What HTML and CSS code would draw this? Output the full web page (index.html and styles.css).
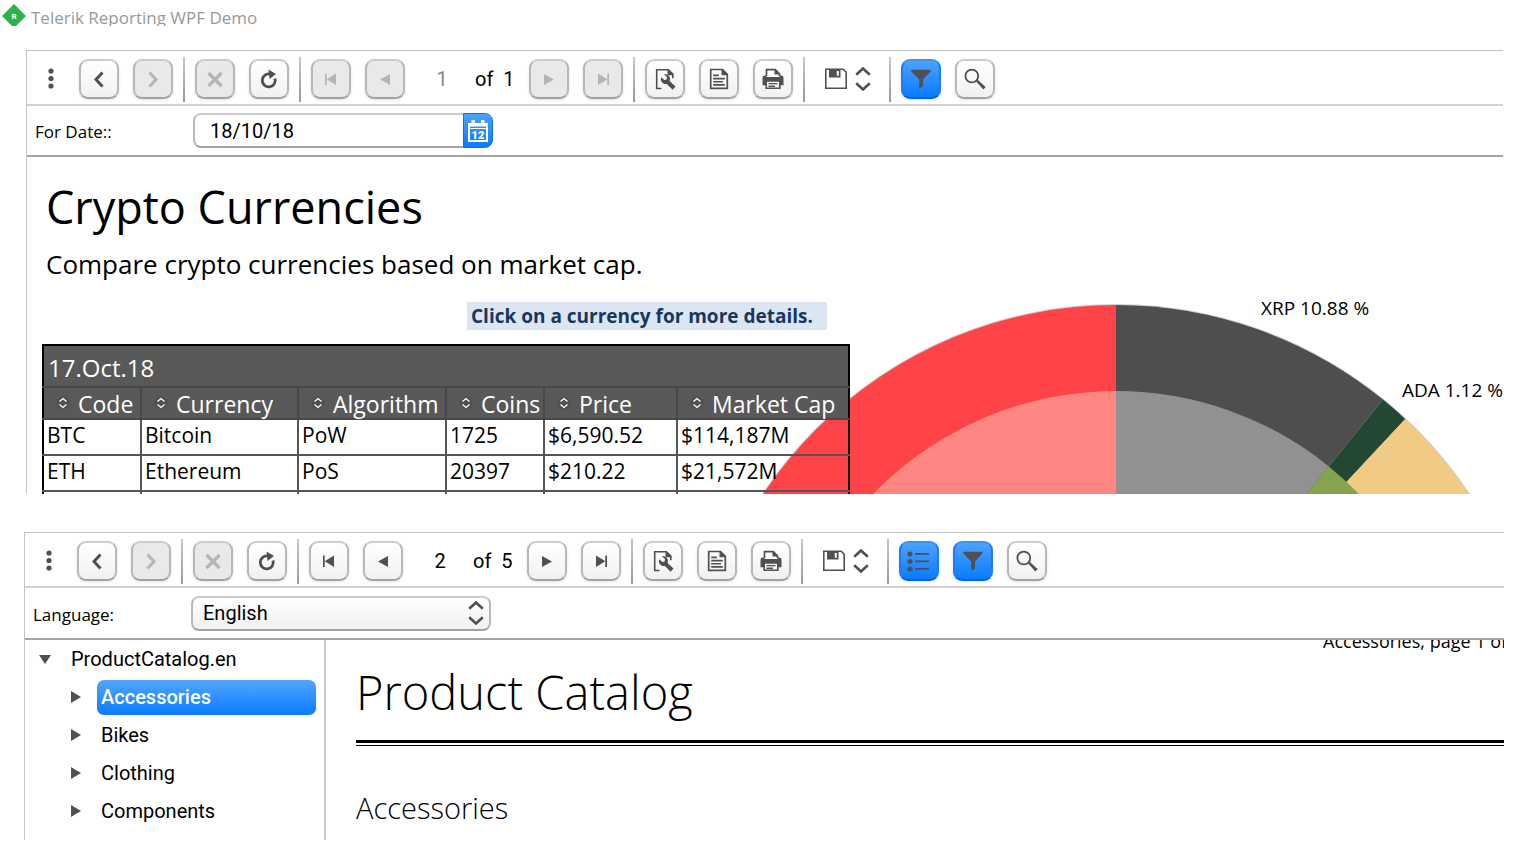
FILE: index.html
```
<!DOCTYPE html>
<html lang="en">
<head>
    <meta charset="UTF-8">
    <meta name="viewport" content="width=device-width, initial-scale=1.0">
    <title>Telerik Reporting WPF Demo</title>
    <link rel="stylesheet" href="styles.css">
</head>
<body>
    <!-- Shared icons -->
    <svg class="sprite" aria-hidden="true">
        <symbol id="i-dots" viewBox="0 0 24 24"><circle cx="12" cy="4" r="2.600"/><circle cx="12" cy="11.500" r="2.600"/><circle cx="12" cy="19" r="2.600"/></symbol>
        <symbol id="i-back" viewBox="0 0 24 24"><path d="M15.500 5.500 9 12.500l6.500 7" fill="none" stroke="currentColor" stroke-width="3"/></symbol>
        <symbol id="i-forward" viewBox="0 0 24 24"><path d="M8.500 5.500 15 12.500l-6.500 7" fill="none" stroke="currentColor" stroke-width="3"/></symbol>
        <symbol id="i-stop" viewBox="0 0 24 24"><path d="M5.500 6l13 13M18.500 6l-13 13" fill="none" stroke="currentColor" stroke-width="3.400"/></symbol>
        <symbol id="i-refresh" viewBox="0 0 24 24"><path d="M13 7a6.500 6.500 0 1 0 5 4.500" fill="none" stroke="currentColor" stroke-width="2.800"/><path d="M11.500 2.500 19 7l-6.500 5z"/></symbol>
        <symbol id="i-first" viewBox="0 0 24 24"><path d="M6 6.500h1.700V18H6zM17 6.500V18l-9.300-5.700z"/></symbol>
        <symbol id="i-prev" viewBox="0 0 24 24"><path d="M17 7v11l-10-5.500z"/></symbol>
        <symbol id="i-next" viewBox="0 0 24 24"><path d="M7 7v11l10-5.500z"/></symbol>
        <symbol id="i-last" viewBox="0 0 24 24"><path d="M18 6.500h-1.700V18H18zM7 6.500V18l9.300-5.700z"/></symbol>
        <symbol id="i-setup" viewBox="0 0 24 24"><path d="M8.500 21.500H3.700V2.700h11.600l4.500 4.500v4" fill="none" stroke="currentColor" stroke-width="1.600"/><path d="M14.500 1.900v6.300h6.200z"/><path d="M8.200 10.200l3.200 2.900 2.200-.700.400-2.400-3.200-2.700c3-.6 6.200 1.400 6.200 4.700 0 .9-.2 1.500-.4 2l5.900 5.400-2.800 3.400-5.900-5.900c-3.600 1.100-7-2.900-5.600-6.700z"/></symbol>
        <symbol id="i-doc" viewBox="0 0 24 24"><path d="M3.700 2.500h11.800l4.800 4.800v14H3.700z" fill="none" stroke="currentColor" stroke-width="1.700"/><path d="M14.500 1.700v6.600h6.600zM6.200 7.500h5.600v1.700H6.200zM6.200 10.700h11.600v1.700H6.200zM6.200 13.900h9.800v1.700H6.200zM6.200 17.100h11.600v1.700H6.200z"/></symbol>
        <symbol id="i-print" viewBox="0 0 24 24"><path d="M5.500 9V2.600h8.800l4.200 4.200V9" fill="none" stroke="currentColor" stroke-width="1.700"/><path d="M13.500 2v5.600h5.600zM1.500 11q0-2.500 2.500-2.500h1.500V10h13V8.500H20q2.500 0 2.500 2.500v7.300H19v-4.600H5v4.600H1.500z"/><path d="M5.200 13.900h13.600v7.400H5.200z" fill="none" stroke="currentColor" stroke-width="1.600"/><path d="M7.500 15.900h9v1.400h-9zM7.500 18.500h6.500v1.400H7.500z"/></symbol>
        <symbol id="i-save" viewBox="0 0 24 24"><path d="M1.800 2.300h17.400l3 3v15.900H1.800z" fill="none" stroke="currentColor" stroke-width="1.600"/><path d="M5 2.300h11.500v8.200H5zM12.800 4v4.800h2V4z" fill-rule="evenodd"/></symbol>
        <symbol id="i-updown" viewBox="0 0 16 24"><path d="M1.200 7.800 8 1.500l6.800 6.300M1.200 16.200 8 22.500l6.800-6.300" fill="none" stroke="currentColor" stroke-width="2.600"/></symbol>
        <symbol id="i-list" viewBox="0 0 24 24"><path d="M8 4h14v1.800H8zM8 11.500h14v1.800H8zM8 19h14v1.800H8z"/><circle cx="3" cy="5" r="2.500"/><circle cx="3" cy="12.400" r="2.500"/><circle cx="3" cy="20" r="2.500"/></symbol>
        <symbol id="i-filter" viewBox="0 0 24 24"><path d="M2.300 2.800h19.200v1.700L14 12.400v6.800L10.200 22v-9.600L2.300 4.500z"/></symbol>
        <symbol id="i-search" viewBox="0 0 24 24"><circle cx="8.800" cy="9" r="6.400" fill="none" stroke="currentColor" stroke-width="1.800"/><path d="M13 14.300l1.600-1.500 8 7.200-2.300 2.500z"/></symbol>
        <symbol id="i-calendar" viewBox="0 0 24 24"><path d="M2 4h20v19H2zM4 10v11h16V10z" fill-rule="evenodd"/><path d="M5.500 1h3.500v5H5.500zM15 1h3.500v5H15z"/><path d="M4 7.500h16v1.500H4z" fill="#3391ff"/><text x="12" y="20" text-anchor="middle" class="cal-text">12</text></symbol>
        <symbol id="i-sort" viewBox="0 0 14 14"><circle cx="7" cy="7" r="6.500" fill="#505050"/><path d="M3.500 5.500 7 2.500l3.500 3M3.500 8.500l3.500 3 3.500-3" fill="none" stroke="currentColor" stroke-width="1.300"/></symbol>
    </svg>

    <header class="titlebar">
        <svg class="logo" viewBox="0 0 24 24" aria-hidden="true">
            <path d="M12 0.500 23.500 12 12 23.500 0.500 12z" fill="#2bb24c" stroke="#2bb24c" stroke-linejoin="round"/>
            <text x="12" y="15" text-anchor="middle" class="logo-text">R</text>
        </svg>
        <span>Telerik Reporting WPF Demo</span>
    </header>

    <!-- Crypto Currencies viewer -->
    <section class="viewer viewer-crypto">
        <div class="toolbar">
            <button class="plain menu" aria-label="Menu"><svg class="icon"><use href="#i-dots"/></svg></button>
            <div class="group">
                <button class="btn" aria-label="Back"><svg class="icon"><use href="#i-back"/></svg></button>
                <button class="btn" aria-label="Forward" disabled><svg class="icon"><use href="#i-forward"/></svg></button>
            </div>
            <span class="sep"></span>
            <div class="group">
                <button class="btn" aria-label="Stop" disabled><svg class="icon"><use href="#i-stop"/></svg></button>
                <button class="btn" aria-label="Refresh"><svg class="icon"><use href="#i-refresh"/></svg></button>
            </div>
            <span class="sep"></span>
            <div class="group">
                <button class="btn" aria-label="First page" disabled><svg class="icon"><use href="#i-first"/></svg></button>
                <button class="btn" aria-label="Previous page" disabled><svg class="icon"><use href="#i-prev"/></svg></button>
                <label class="pager"><input type="text" value="1" aria-label="Page" disabled><span>of</span><span>1</span></label>
                <button class="btn" aria-label="Next page" disabled><svg class="icon"><use href="#i-next"/></svg></button>
                <button class="btn" aria-label="Last page" disabled><svg class="icon"><use href="#i-last"/></svg></button>
            </div>
            <span class="sep"></span>
            <div class="group">
                <button class="btn" aria-label="Page setup"><svg class="icon"><use href="#i-setup"/></svg></button>
                <button class="btn" aria-label="Print preview"><svg class="icon"><use href="#i-doc"/></svg></button>
                <button class="btn" aria-label="Print"><svg class="icon"><use href="#i-print"/></svg></button>
            </div>
            <span class="sep"></span>
            <button class="plain export" aria-label="Export"><svg class="icon"><use href="#i-save"/></svg><svg class="icon-updown"><use href="#i-updown"/></svg></button>
            <span class="sep"></span>
            <div class="group">
                <button class="btn active" aria-label="Parameters"><svg class="icon"><use href="#i-filter"/></svg></button>
                <button class="btn" aria-label="Search"><svg class="icon"><use href="#i-search"/></svg></button>
            </div>
        </div>

        <div class="params">
            <label for="for-date">For Date::</label>
            <div class="date-box">
                <input type="text" id="for-date" value="18/10/18">
                <button class="date-button" aria-label="Open calendar"><svg class="icon"><use href="#i-calendar"/></svg></button>
            </div>
        </div>

        <div class="report report-crypto">
            <!-- Market cap chart, runs behind the table -->
            <svg class="chart" viewBox="-424 -444 848 444" role="img" aria-label="Market cap chart">
                <circle r="425" fill="#cfcfcf"/>
                <path d="M0 0V-424A424 424 0 0 0 -424 0z" fill="#fe4449"/>
                <path d="M0 0V-424A424 424 0 0 1 267 -329.400z" fill="#4e4e4e"/>
                <path d="M0 0 267 -329.400A424 424 0 0 1 289.200 -310z" fill="#224733"/>
                <path d="M0 0 289.200 -310A424 424 0 0 1 424 0z" fill="#f1ca83"/>
                <path d="M0 0V-338A338 338 0 0 0 -338 0z" fill="#fd8683"/>
                <path d="M0 0V-338A338 338 0 0 1 212.800 -262.600z" fill="#919191"/>
                <path d="M0 0 212.800 -262.600A338 338 0 0 1 338 0z" fill="#87a34f"/>
                <text x="145" y="-414">XRP 10.88 %</text>
                <text x="286" y="-332">ADA 1.12 %</text>
            </svg>
            <h1>Crypto Currencies</h1>
            <p class="subtitle">Compare crypto currencies based on market cap.</p>
            <p class="hint">Click on a currency for more details.</p>
            <table class="currencies">
                <colgroup>
                    <col class="c-code"><col class="c-currency"><col class="c-algorithm"><col class="c-coins"><col class="c-price"><col class="c-cap">
                </colgroup>
                <thead>
                    <tr class="date-row"><th colspan="6">17.Oct.18</th></tr>
                    <tr class="head-row">
                        <th><svg class="sort"><use href="#i-sort"/></svg>Code</th>
                        <th><svg class="sort"><use href="#i-sort"/></svg>Currency</th>
                        <th><svg class="sort"><use href="#i-sort"/></svg>Algorithm</th>
                        <th><svg class="sort"><use href="#i-sort"/></svg>Coins</th>
                        <th><svg class="sort"><use href="#i-sort"/></svg>Price</th>
                        <th><svg class="sort"><use href="#i-sort"/></svg>Market Cap</th>
                    </tr>
                </thead>
                <tbody>
                    <tr><td>BTC</td><td>Bitcoin</td><td>PoW</td><td>1725</td><td>$6,590.52</td><td>$114,187M</td></tr>
                    <tr><td>ETH</td><td>Ethereum</td><td>PoS</td><td>20397</td><td>$210.22</td><td>$21,572M</td></tr>
                    <tr><td></td><td></td><td></td><td></td><td></td><td></td></tr>
                </tbody>
            </table>
        </div>
    </section>

    <!-- Product Catalog viewer -->
    <section class="viewer viewer-catalog">
        <div class="toolbar">
            <button class="plain menu" aria-label="Menu"><svg class="icon"><use href="#i-dots"/></svg></button>
            <div class="group">
                <button class="btn" aria-label="Back"><svg class="icon"><use href="#i-back"/></svg></button>
                <button class="btn" aria-label="Forward" disabled><svg class="icon"><use href="#i-forward"/></svg></button>
            </div>
            <span class="sep"></span>
            <div class="group">
                <button class="btn" aria-label="Stop" disabled><svg class="icon"><use href="#i-stop"/></svg></button>
                <button class="btn" aria-label="Refresh"><svg class="icon"><use href="#i-refresh"/></svg></button>
            </div>
            <span class="sep"></span>
            <div class="group">
                <button class="btn" aria-label="First page"><svg class="icon"><use href="#i-first"/></svg></button>
                <button class="btn" aria-label="Previous page"><svg class="icon"><use href="#i-prev"/></svg></button>
                <label class="pager"><input type="text" value="2" aria-label="Page"><span>of</span><span>5</span></label>
                <button class="btn" aria-label="Next page"><svg class="icon"><use href="#i-next"/></svg></button>
                <button class="btn" aria-label="Last page"><svg class="icon"><use href="#i-last"/></svg></button>
            </div>
            <span class="sep"></span>
            <div class="group">
                <button class="btn" aria-label="Page setup"><svg class="icon"><use href="#i-setup"/></svg></button>
                <button class="btn" aria-label="Print preview"><svg class="icon"><use href="#i-doc"/></svg></button>
                <button class="btn" aria-label="Print"><svg class="icon"><use href="#i-print"/></svg></button>
            </div>
            <span class="sep"></span>
            <button class="plain export" aria-label="Export"><svg class="icon"><use href="#i-save"/></svg><svg class="icon-updown"><use href="#i-updown"/></svg></button>
            <span class="sep"></span>
            <div class="group">
                <button class="btn active" aria-label="Document map"><svg class="icon"><use href="#i-list"/></svg></button>
                <button class="btn active" aria-label="Parameters"><svg class="icon"><use href="#i-filter"/></svg></button>
                <button class="btn" aria-label="Search"><svg class="icon"><use href="#i-search"/></svg></button>
            </div>
        </div>

        <div class="params">
            <label for="language">Language:</label>
            <div class="select-box">
                <select id="language"><option>English</option></select>
                <svg class="icon-updown"><use href="#i-updown"/></svg>
            </div>
        </div>

        <div class="split">
            <nav class="tree">
                <div class="node root"><button class="plain toggle open" aria-label="Collapse"></button><a href="#catalog">ProductCatalog.en</a></div>
                <div class="node"><button class="plain toggle" aria-label="Expand"></button><a href="#accessories" class="selected">Accessories</a></div>
                <div class="node"><button class="plain toggle" aria-label="Expand"></button><a href="#bikes">Bikes</a></div>
                <div class="node"><button class="plain toggle" aria-label="Expand"></button><a href="#clothing">Clothing</a></div>
                <div class="node"><button class="plain toggle" aria-label="Expand"></button><a href="#components">Components</a></div>
            </nav>
            <div class="report report-catalog">
                <p class="page-info">Accessories, page 1 of 5</p>
                <h1>Product Catalog</h1>
                <h2>Accessories</h2>
            </div>
        </div>
    </section>
</body>
</html>
```

FILE: styles.css
```
* {
    box-sizing: border-box;
}

body {
    margin: 0;
    background-color: #fff;
    color: #000;
    font-family: "Open Sans", "Noto Sans", sans-serif;
    overflow: hidden;
}

h1, h2, p {
    margin: 0;
    font-weight: 400;
}

button, input, select {
    font-family: Roboto, sans-serif;
    font-size: 20px;
    margin: 0;
    padding: 0;
}

svg {
    display: block;
    fill: currentColor;
}

.sprite {
    display: none;
}

.titlebar {
    display: flex;
    gap: 5px;
    height: 26px;
    padding: 4px 2px 0;
    overflow: hidden;
    color: #999;
    font-size: 17px;
    line-height: 28px;
    white-space: nowrap;
}

.logo {
    width: 24px;
    height: 24px;
}

.logo-text {
    fill: #fff;
    font: 700 8px Roboto, sans-serif;
}

/* Viewer */
.viewer {
    margin: 24px 33px 0 26px;
    border-top: 1px solid #c4c4c4;
    border-left: 1px solid #c4c4c4;
}

.viewer-catalog {
    margin: 38px 32px 0 24px;
}

.toolbar {
    display: flex;
    align-items: center;
    gap: 10px;
    height: 55px;
    padding-top: 3px;
    border-bottom: 2px solid #d2d2d2;
    color: #505050;
}

.group {
    display: flex;
    gap: 14px;
}

.sep {
    width: 2px;
    height: 45px;
    background: linear-gradient(#c8c8c8, #999);
}

.icon {
    flex: none;
    width: 24px;
    height: 24px;
}

.icon-updown {
    flex: none;
    width: 16px;
    height: 24px;
    color: #505050;
}

.btn {
    display: flex;
    align-items: center;
    justify-content: center;
    width: 40px;
    height: 40px;
    border: 2px solid;
    border-color: #ccc #b8b8b8 #a2a2a2;
    border-radius: 9px;
    background: linear-gradient(#fff, #f1f1f1);
    box-shadow: 0 1px 3px rgba(0, 0, 0, 0.12);
    color: #505050;
}

.btn:disabled {
    background: #e9e9e9;
    color: #b5b5b5;
}

.btn.active {
    border-color: #3f93f5 #1f7df0 #0066e6;
    background: linear-gradient(#4ba2ff, #0a7bff);
}

.plain {
    display: flex;
    align-items: center;
    border: 0;
    background: none;
    color: #505050;
}

.menu {
    width: 42px;
    padding-left: 12px;
}

.export {
    gap: 7px;
    width: 64px;
    padding-left: 9px;
}

.pager {
    display: flex;
    align-items: center;
    gap: 10px;
    width: 96px;
    font: 20px Roboto, sans-serif;
    color: #000;
}

.pager input {
    width: 46px;
    border: 0;
    background: none;
    color: #000;
    text-align: center;
}

.pager input:disabled {
    color: #888;
}

/* Parameters row */
.params {
    display: flex;
    align-items: center;
    height: 51px;
    padding-left: 8px;
    border-bottom: 2px solid #a6a6a6;
    font-size: 17px;
}

.viewer-catalog .params {
    height: 52px;
}

.params label {
    width: 158px;
    padding-top: 2px;
}

.date-box, .select-box {
    position: relative;
    display: flex;
    width: 300px;
    height: 35px;
}

.date-box input {
    flex: 1;
    min-width: 0;
    padding-left: 15px;
    border: 2px solid;
    border-color: #ccc #b8b8b8 #a2a2a2;
    border-right: 0;
    border-radius: 8px 0 0 8px;
}

.date-button {
    display: flex;
    align-items: center;
    justify-content: center;
    width: 30px;
    border: 1px solid #1670e0;
    border-radius: 0 8px 8px 0;
    background: linear-gradient(#4ba2ff, #0a7bff);
    color: #fff;
}

.cal-text {
    font: 900 11px Roboto, sans-serif;
}

.select-box select {
    appearance: none;
    width: 100%;
    padding-left: 10px;
    border: 2px solid;
    border-color: #ccc #b8b8b8 #a2a2a2;
    border-radius: 8px;
    background: linear-gradient(#fff, #f1f1f1);
    color: #000;
}

.select-box .icon-updown {
    position: absolute;
    top: 5px;
    right: 7px;
    pointer-events: none;
}

/* Crypto report */
.report {
    position: relative;
    overflow: hidden;
}

.report-crypto {
    height: 337px;
    padding-left: 15px;
}

.chart {
    position: absolute;
    top: 128px;
    left: 665px;
    width: 848px;
    height: 444px;
}

.chart text {
    font-size: 19px;
    fill: #000;
}

.report-crypto h1 {
    position: relative;
    padding: 18px 0 0 4px;
    font-size: 45px;
    line-height: 64px;
}

.subtitle {
    padding-left: 4px;
    font-size: 26px;
    line-height: 50px;
}

.hint {
    width: 360px;
    margin: 13px 0 14px 425px;
    padding-left: 4px;
    background-color: #dce6f2;
    color: #17375e;
    font-size: 19px;
    font-weight: 700;
    line-height: 28px;
    white-space: nowrap;
}

.currencies {
    position: relative;
    width: 806px;
    table-layout: fixed;
    border-collapse: collapse;
    border: 2px solid #000;
}

.c-code { width: 98px; }
.c-currency { width: 157px; }
.c-algorithm { width: 148px; }
.c-coins { width: 98px; }
.c-price { width: 133px; }
.c-cap { width: 172px; }

.currencies th {
    padding: 0 0 0 4px;
    border: 2px solid #484848;
    background-color: #595959;
    color: #fff;
    font-size: 23px;
    font-weight: 400;
    text-align: left;
    line-height: 28px;
    white-space: nowrap;
}

.currencies .date-row th {
    height: 42px;
    padding-top: 3px;
    border-top-color: #000;
    font-size: 24px;
}

.currencies .head-row th {
    height: 32px;
    padding: 2px 0 0 12px;
}

.sort {
    display: inline-block;
    width: 14px;
    height: 14px;
    margin-right: 8px;
    vertical-align: 3px;
}

.currencies td {
    height: 36px;
    padding: 0 0 4px 3px;
    border: 2px solid #555;
    font-size: 21px;
    line-height: 28px;
}

.currencies tr > :first-child {
    border-left-color: #000;
}

.currencies tr > :last-child {
    border-right-color: #000;
}

/* Catalog report */
.split {
    display: flex;
    height: 200px;
}

.tree {
    flex: none;
    width: 301px;
    border-right: 2px solid #c8c8c8;
    font-family: Roboto, sans-serif;
    font-size: 20px;
}

.node {
    display: flex;
    align-items: center;
    height: 38px;
    padding: 0 8px 0 46px;
}

.node.root {
    padding-left: 14px;
}

.node a {
    flex: 1;
    margin-left: 16px;
    padding-left: 4px;
    border-radius: 7px;
    color: #000;
    line-height: 35px;
    text-decoration: none;
}

.node a.selected {
    background: linear-gradient(#52a6ff, #0a7bff);
    color: #fff;
    font-weight: 500;
}

.toggle::before {
    content: "";
    border: solid transparent;
    border-width: 6px 0 6px 10px;
    border-left-color: #505050;
}

.toggle.open::before {
    border-width: 9px 6px 0;
    border-color: #505050 transparent transparent;
}

.report-catalog {
    flex: 1;
    padding-left: 30px;
    font-weight: 300;
}

.page-info {
    width: 181px;
    margin: -13px 0 0 auto;
    font-size: 18px;
    line-height: 28px;
    white-space: nowrap;
}

.report-catalog h1 {
    padding: 1px 0 12px;
    border-bottom: 3px solid #000;
    font-size: 47px;
    font-weight: 300;
    line-height: 72px;
}

.report-catalog h1::after {
    content: "";
    position: absolute;
    left: 30px;
    right: 0;
    top: 105px;
    border-top: 1px solid #000;
}

.report-catalog h2 {
    padding-top: 45px;
    font-size: 29px;
    font-weight: 300;
    line-height: 40px;
}
```
